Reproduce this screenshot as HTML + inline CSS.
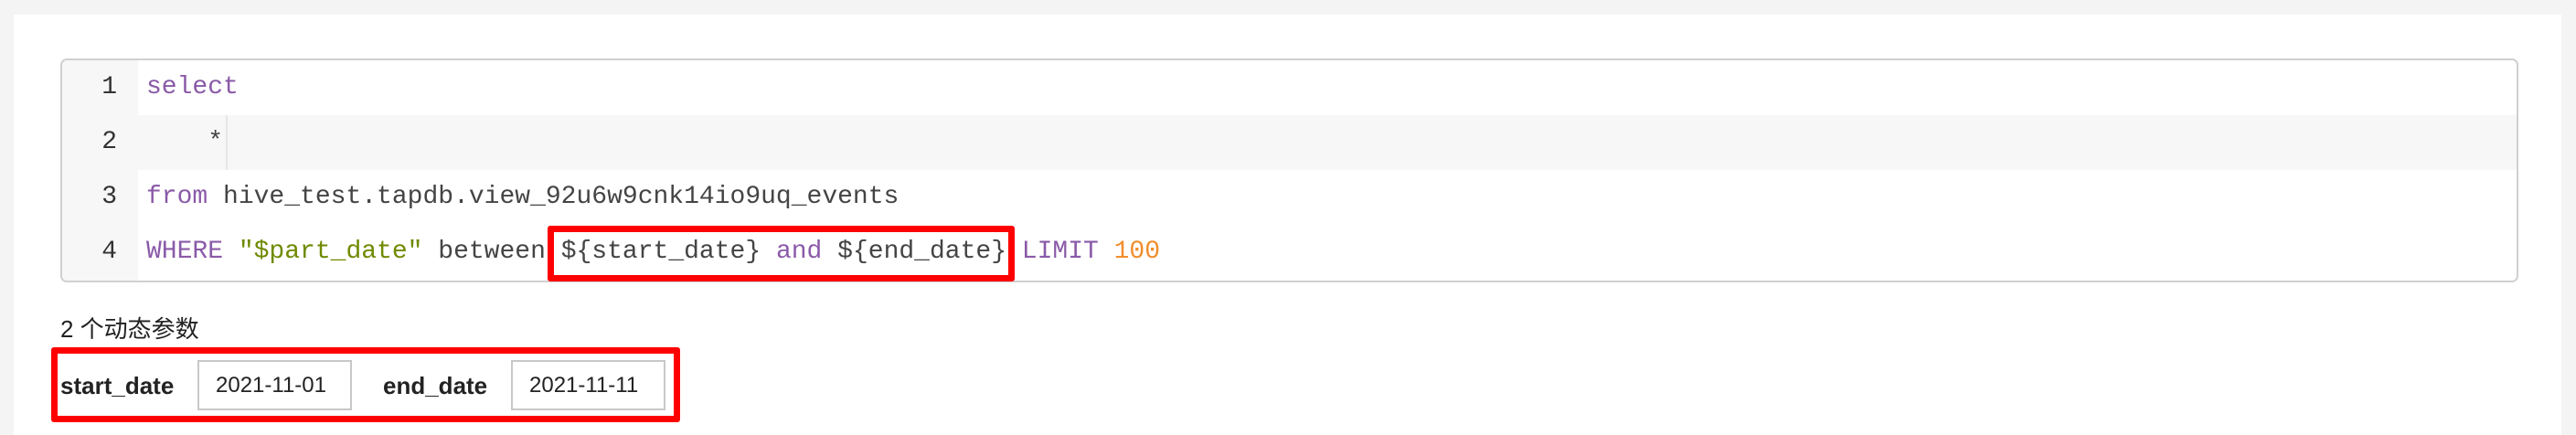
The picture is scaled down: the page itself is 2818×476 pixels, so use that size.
<!DOCTYPE html>
<html><head><meta charset="utf-8"><style>
html,body{margin:0;padding:0}
body{width:2818px;height:466px;background:#f4f4f4;position:relative;overflow:hidden;font-family:"Liberation Sans","Noto Sans CJK SC",sans-serif}
.panel{position:absolute;left:15px;top:16px;width:2787px;height:460px;background:#fff}
.code{position:absolute;left:66px;top:64px;width:2685px;height:241px;border:2px solid #d0d0d0;border-radius:7px;overflow:hidden;background:#fff}
.gutter{position:absolute;left:0;top:0;width:83px;height:100%;background:#f7f7f7}
.row{position:absolute;left:0;width:100%;height:60px;font-family:"Liberation Mono",monospace;font-size:28px;line-height:60px;color:#444;white-space:pre}
.row .n{position:absolute;left:0;width:60px;text-align:right;color:#333}
.row .t{position:absolute;left:92px}
.k{color:#8a5aa8}.s{color:#6f8a00}.num{color:#f08d2c}
.act{background:#f7f7f7}
.cur{position:absolute;left:179px;top:0;width:2px;height:60px;background:#e6e6e6}
.rb{position:absolute;border:7px solid #ff0000;border-radius:3px;box-sizing:border-box}
.lbl{position:absolute;font-weight:bold;font-size:26px;color:#222;top:405px;line-height:34px}
.inp{position:absolute;top:394px;width:169px;height:55px;border:2px solid #c8c8c8;box-sizing:border-box;font-size:24px;line-height:51px;padding-left:18px;color:#222}
</style></head><body>
<div class="panel"></div>
<div class="code">
<div class="gutter"></div>
<div class="row" style="top:0"><span class="n">1</span><span class="t"><span class="k">select</span></span></div>
<div class="row act" style="top:60px"><span class="n">2</span><span class="cur"></span><span class="t">    *</span></div>
<div class="row" style="top:120px"><span class="n">3</span><span class="t"><span class="k">from</span> hive_test.tapdb.view_92u6w9cnk14io9uq_events</span></div>
<div class="row" style="top:180px"><span class="n">4</span><span class="t"><span class="k">WHERE</span> <span class="s">"$part_date"</span> between ${start_date} <span class="k">and</span> ${end_date} <span class="k">LIMIT</span> <span class="num">100</span></span></div>
</div>
<div class="rb" style="left:599px;top:247px;width:511px;height:61px"></div>
<div style="position:absolute;left:66px;top:343px;font-size:26px;line-height:34px;color:#222">2 个动态参数</div>
<div class="rb" style="left:56px;top:380px;width:688px;height:82px"></div>
<div class="lbl" style="left:66px">start_date</div>
<div class="inp" style="left:216px">2021-11-01</div>
<div class="lbl" style="left:419px">end_date</div>
<div class="inp" style="left:559px">2021-11-11</div>
</body></html>
